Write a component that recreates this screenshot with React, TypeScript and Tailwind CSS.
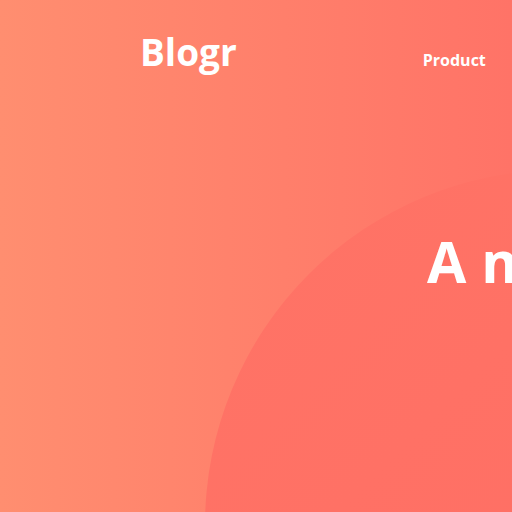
import React from "react";

export default function App() {
  return (
    <div
      className="relative w-[512px] h-[512px] overflow-hidden bg-[linear-gradient(to_right,#ff8e70,#ff7367)]"
      style={{ fontFamily: '"Open Sans", "Noto Sans", sans-serif' }}
    >
      <div className="absolute left-[205px] top-[170px] w-[710px] h-[710px] rounded-full bg-[linear-gradient(135deg,#ff7466,#ff6b63)]" />
      <div className="relative">
        <header className="flex items-start pl-[140px] pt-[28px]">
          <div className="text-[37px] leading-[48px] font-bold text-white">Blogr</div>
          <nav className="ml-[186px] mt-[20px] text-[16px] leading-[24px] font-bold text-white">Product</nav>
        </header>
        <h1 className="pl-[427px] pt-[155px] text-[57px] leading-[60px] font-bold text-white whitespace-nowrap">
          A modern publishing platform
        </h1>
      </div>
    </div>
  );
}
